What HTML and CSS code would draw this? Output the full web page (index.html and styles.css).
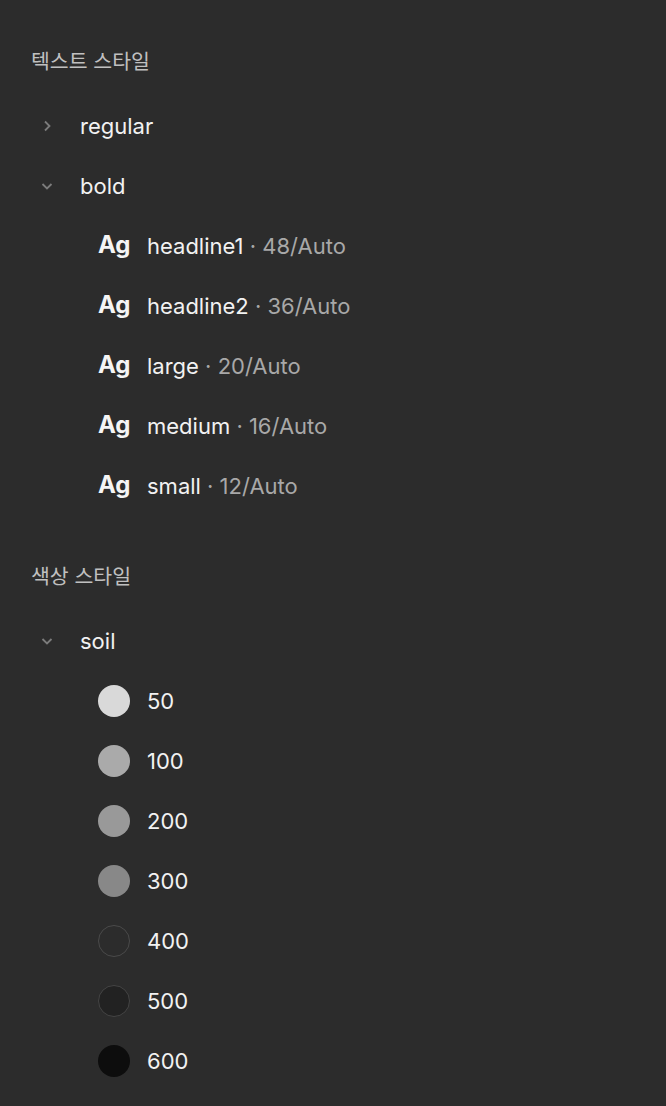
FILE: index.html
```html
<!DOCTYPE html>
<html lang="ko">
<head>
<meta charset="utf-8">
<link rel="stylesheet" href="styles.css">
</head>
<body>
<div class="panel">
  <section class="section">
    <h2 class="heading">텍스트 스타일</h2>
    <div class="group">
      <div class="row">
        <span class="chev"><svg width="16" height="16" viewBox="0 0 16 16"><path d="M6 3.5 L10.5 8 L6 12.5" fill="none" stroke="#7c7c7c" stroke-width="1.8"/></svg></span>
        <span class="label">regular</span>
      </div>
    </div>
    <div class="group">
      <div class="row">
        <span class="chev"><svg width="16" height="16" viewBox="0 0 16 16"><path d="M3.5 6 L8 10.5 L12.5 6" fill="none" stroke="#7c7c7c" stroke-width="1.8"/></svg></span>
        <span class="label">bold</span>
      </div>
      <div class="item"><span class="ag">Ag</span><span class="label">headline1</span><span class="meta">&nbsp;· 48/Auto</span></div>
      <div class="item"><span class="ag">Ag</span><span class="label">headline2</span><span class="meta">&nbsp;· 36/Auto</span></div>
      <div class="item"><span class="ag">Ag</span><span class="label">large</span><span class="meta">&nbsp;· 20/Auto</span></div>
      <div class="item"><span class="ag">Ag</span><span class="label">medium</span><span class="meta">&nbsp;· 16/Auto</span></div>
      <div class="item"><span class="ag">Ag</span><span class="label">small</span><span class="meta">&nbsp;· 12/Auto</span></div>
    </div>
  </section>
  <section class="section">
    <h2 class="heading">색상 스타일</h2>
    <div class="group">
      <div class="row">
        <span class="chev"><svg width="16" height="16" viewBox="0 0 16 16"><path d="M3.5 6 L8 10.5 L12.5 6" fill="none" stroke="#7c7c7c" stroke-width="1.8"/></svg></span>
        <span class="label">soil</span>
      </div>
      <div class="item"><span class="dot c50"></span><span class="label">50</span></div>
      <div class="item"><span class="dot c100"></span><span class="label">100</span></div>
      <div class="item"><span class="dot c200"></span><span class="label">200</span></div>
      <div class="item"><span class="dot c300"></span><span class="label">300</span></div>
      <div class="item"><span class="dot c400"></span><span class="label">400</span></div>
      <div class="item"><span class="dot c500"></span><span class="label">500</span></div>
      <div class="item"><span class="dot c600"></span><span class="label">600</span></div>
    </div>
  </section>
</div>
</body>
</html>
```

FILE: styles.css
```css
html, body {
  margin: 0;
  padding: 0;
  background: #2c2c2c;
}
body {
  font-family: "Inter", "Noto Sans CJK KR", sans-serif;
  color: #f2f2f2;
  width: 666px;
  height: 1106px;
  overflow: hidden;
}
.panel {
  padding: 30px 0 0 31px;
  display: flex;
  flex-direction: column;
  gap: 29px;
}
.section {
  display: flex;
  flex-direction: column;
}
.heading {
  margin: 0 0 6px 0;
  height: 60px;
  display: flex;
  align-items: center;
  font-size: 20.5px;
  font-weight: 400;
  color: #c0c0c0;
  font-family: "Inter", "Noto Sans CJK KR", sans-serif;
}
.group {
  display: flex;
  flex-direction: column;
}
.row {
  height: 60px;
  display: flex;
  align-items: center;
}
.chev {
  width: 49px;
  display: flex;
  align-items: center;
  padding-left: 8px;
  box-sizing: border-box;
}
.label {
  font-size: 22px;
  color: #f2f2f2;
}
.item {
  height: 60px;
  display: flex;
  align-items: center;
  padding-left: 67px;
}
.ag {
  width: 49px;
  font-size: 24px;
  font-weight: 700;
  color: #f5f5f5;
  position: relative;
  top: -2px;
}
.meta {
  font-size: 22px;
  color: #a8a8a8;
}
.dot {
  width: 32px;
  height: 32px;
  border-radius: 50%;
  margin-right: 17px;
  box-sizing: border-box;
}
.c50 { background: #d9d9d9; }
.c100 { background: #aaaaaa; }
.c200 { background: #999999; }
.c300 { background: #888888; }
.c400 { background: #2c2c2c; border: 1px solid #4a4a4a; }
.c500 { background: #222222; border: 1px solid #444444; }
.c600 { background: #0d0d0d; }
```
